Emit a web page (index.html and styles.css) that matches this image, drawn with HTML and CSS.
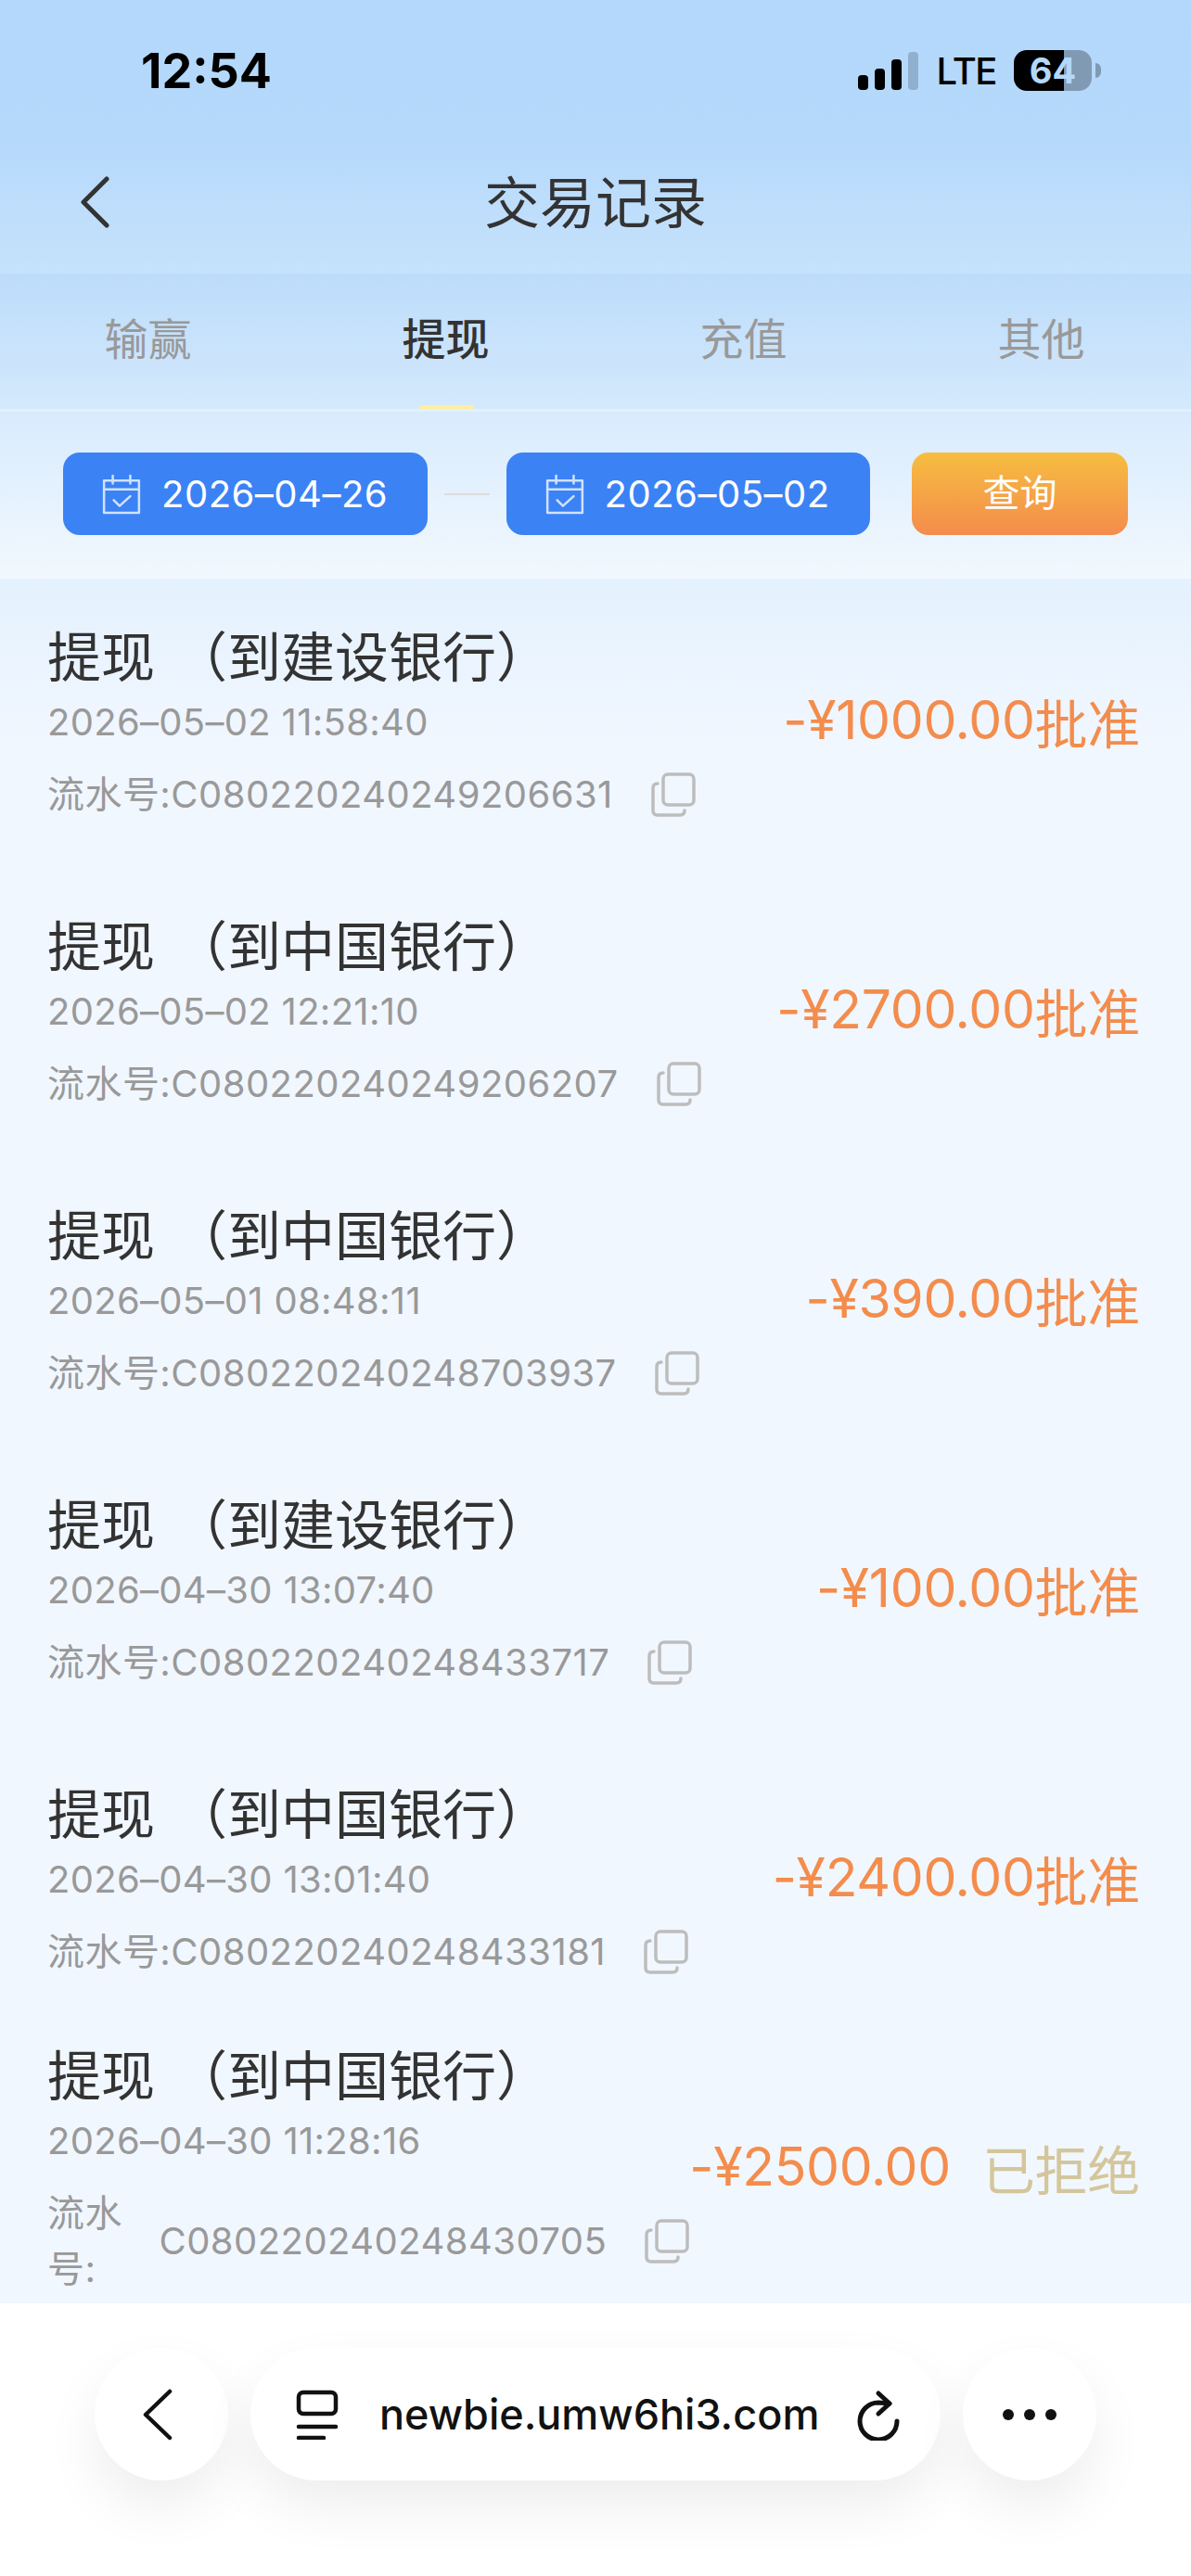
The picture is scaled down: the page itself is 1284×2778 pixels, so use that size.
FILE: index.html
```html
<!DOCTYPE html>
<html lang="zh-CN">

<head>
    <meta charset="UTF-8">
    <meta name="viewport" content="width=device-width, initial-scale=1.0">
    <title>交易记录</title>
    <link rel="stylesheet" href="styles.css">
</head>

<body>
    <div class="page">
        <header class="top">
            <div class="status">
                <span class="time">12:54</span>
                <div class="status-right">
                    <div class="signal">
                        <i class="bar bar-1"></i>
                        <i class="bar bar-2"></i>
                        <i class="bar bar-3"></i>
                        <i class="bar bar-4"></i>
                    </div>
                    <span class="lte">LTE</span>
                    <div class="battery"><span class="battery-level">64</span></div>
                    <i class="battery-cap"></i>
                </div>
            </div>
            <div class="nav">
                <svg class="nav-back" viewBox="0 0 32 56" fill="none" stroke="#333" stroke-width="5" stroke-linecap="round" stroke-linejoin="round">
                    <path d="M29 3 L4 28 L29 53" />
                </svg>
                <h1 class="nav-title">交易记录</h1>
            </div>
        </header>

        <nav class="tabs">
            <div class="tab">输赢</div>
            <div class="tab active">提现</div>
            <div class="tab">充值</div>
            <div class="tab">其他</div>
        </nav>

        <section class="filter">
            <div class="date-btn">
                <svg class="cal" viewBox="0 0 42 42" fill="none" stroke="#cfe2fd" stroke-width="2.4" stroke-linecap="round" stroke-linejoin="round">
                    <path d="M3 7 H39 V40 H3 Z" />
                    <path d="M3 16 H39" />
                    <path d="M12 2 V10 M30 2 V10" />
                    <path d="M13 27 L19 33 L30 23" />
                </svg>
                <span>2026–04–26</span>
            </div>
            <i class="dash"></i>
            <div class="date-btn">
                <svg class="cal" viewBox="0 0 42 42" fill="none" stroke="#cfe2fd" stroke-width="2.4" stroke-linecap="round" stroke-linejoin="round">
                    <path d="M3 7 H39 V40 H3 Z" />
                    <path d="M3 16 H39" />
                    <path d="M12 2 V10 M30 2 V10" />
                    <path d="M13 27 L19 33 L30 23" />
                </svg>
                <span>2026–05–02</span>
            </div>
            <div class="search-btn">查询</div>
        </section>

        <main class="list" id="list"></main>

        <footer class="toolbar">
            <div class="round-btn">
                <svg class="tool-back" viewBox="0 0 32 56" fill="none" stroke="#111" stroke-width="4.5" stroke-linecap="round" stroke-linejoin="round">
                    <path d="M29 3 L3 28 L29 53" />
                </svg>
            </div>
            <div class="url-bar">
                <svg class="url-icon" viewBox="0 0 48 54" fill="none" stroke="#111" stroke-width="4.5" stroke-linecap="round" stroke-linejoin="round">
                    <rect x="4" y="3" width="40" height="23" rx="5" />
                    <path d="M4 40 H44" />
                    <path d="M4 52 H31" />
                </svg>
                <span class="url-text">newbie.umw6hi3.com</span>
                <svg class="reload" viewBox="0 0 48 56" fill="none" stroke="#111" stroke-width="5" stroke-linecap="round" stroke-linejoin="round">
                    <path d="M43 35 A20 20 0 1 1 23 15 L35 16" />
                    <path d="M23 5 L35 16 L23 27" />
                </svg>
            </div>
            <div class="round-btn">
                <div class="dots"><i></i><i></i><i></i></div>
            </div>
        </footer>
    </div>

    <script>
        const records = [
            { bank: "建设银行", time: "2026–05–02 11:58:40", no: "C080220240249206631", amount: "-¥1000.00", state: "批准" },
            { bank: "中国银行", time: "2026–05–02 12:21:10", no: "C080220240249206207", amount: "-¥2700.00", state: "批准" },
            { bank: "中国银行", time: "2026–05–01 08:48:11", no: "C080220240248703937", amount: "-¥390.00", state: "批准" },
            { bank: "建设银行", time: "2026–04–30 13:07:40", no: "C080220240248433717", amount: "-¥100.00", state: "批准" },
            { bank: "中国银行", time: "2026–04–30 13:01:40", no: "C080220240248433181", amount: "-¥2400.00", state: "批准" },
            { bank: "中国银行", time: "2026–04–30 11:28:16", no: "C080220240248430705", amount: "-¥2500.00", state: "已拒绝" }
        ];

        const copyIcon = `<svg class="copy" viewBox="0 0 48 48" fill="none" stroke="#bdbdbd" stroke-width="3.5" stroke-linejoin="round" stroke-linecap="round">
            <rect x="13" y="2" width="33" height="33" rx="5" />
            <path d="M7 12 Q2 12 2 17 V41 Q2 46 7 46 H31 Q36 46 36 41" />
        </svg>`;

        // Build the rows
        document.getElementById('list').innerHTML = records.map(r => {
            const stateClass = r.state === "批准" ? "state" : "state rejected";
            return `<article class="row">
                <div class="row-left">
                    <div class="row-title">提现<span class="row-bank">（到${r.bank}）</span></div>
                    <div class="row-time">${r.time}</div>
                    <div class="row-flow">
                        <span class="flow-label">流水号:</span>
                        <span class="flow-no">${r.no}</span>
                        ${copyIcon}
                    </div>
                </div>
                <div class="row-right">
                    <span class="amount">${r.amount}</span>
                    <span class="${stateClass}">${r.state}</span>
                </div>
            </article>`;
        }).join('');
    </script>
</body>

</html>
```

FILE: styles.css
```css
* {
    box-sizing: border-box;
}

body {
    margin: 0;
    font-family: 'Inter', 'Noto Sans CJK SC', sans-serif;
    color: #333;
    background: #f0f6ff;
}

.page {
    width: 1284px;
    height: 2778px;
    display: flex;
    flex-direction: column;
    overflow: hidden;
}

/* status bar + nav */
.top {
    height: 295px;
    background: linear-gradient(180deg, #b4d8fb 0%, #b5d9fb 50%, #c6e2fc 100%);
}

.status {
    height: 148px;
    padding: 4px 97px 0 152px;
    display: flex;
    align-items: center;
    justify-content: space-between;
    color: #000;
}

.time {
    font-family: 'Inter', sans-serif;
    font-size: 52px;
    font-weight: 700;
}

.status-right {
    display: flex;
    align-items: center;
}

.signal {
    display: flex;
    align-items: flex-end;
    gap: 7px;
    height: 41px;
    margin-right: 19px;
}

.bar {
    width: 11px;
    background: #000;
    border-radius: 4px;
}

.bar-1 { height: 16px; }
.bar-2 { height: 23px; }
.bar-3 { height: 33px; }
.bar-4 { height: 41px; background: #90b0d0; }

.lte {
    font-size: 40px;
    font-weight: 500;
    letter-spacing: -1.5px;
    margin-right: 19px;
}

.battery {
    width: 84px;
    height: 44px;
    border-radius: 14px;
    background: linear-gradient(90deg, #000 0, #000 54px, #819ab3 54px);
    display: flex;
    align-items: center;
    justify-content: center;
    color: #b4d8fb;
}

.battery-level {
    font-size: 38px;
    font-weight: 700;
}

.battery-cap {
    width: 6px;
    height: 16px;
    margin-left: 4px;
    background: #819ab3;
    border-radius: 0 8px 8px 0;
}

.nav {
    position: relative;
    height: 147px;
    display: flex;
    align-items: center;
    justify-content: center;
    padding-bottom: 14px;
}

.nav-back {
    position: absolute;
    left: 86px;
    top: 42px;
    width: 32px;
    height: 56px;
}

.nav-title {
    margin: 0;
    font-size: 60px;
    font-weight: 400;
    color: #333;
}

/* tabs */
.tabs {
    height: 149px;
    display: grid;
    grid-template-columns: repeat(4, 1fr);
    background: linear-gradient(180deg, #bcdcfb 0%, #d4e9fc 100%);
    border-bottom: 3px solid #e3f0fd;
}

.tab {
    position: relative;
    padding-right: 2px;
    text-align: center;
    font-size: 47px;
    line-height: 141px;
    color: #999;
}

.tab.active {
    color: #333;
    font-weight: 500;
}

.tab.active::after {
    content: "";
    position: absolute;
    left: 131px;
    bottom: 0;
    width: 59px;
    height: 4px;
    background: #fdeea0;
}

/* date filter */
.filter {
    height: 180px;
    padding: 44px 68px 0;
    display: flex;
    align-items: flex-start;
    background: linear-gradient(180deg, #d8ebfd 0%, #f2f8fe 100%);
}

.date-btn {
    width: 393px;
    height: 89px;
    padding-left: 41px;
    display: flex;
    align-items: center;
    gap: 21px;
    border-radius: 18px;
    background: #3b82f5;
    color: #fff;
    font-size: 40px;
    letter-spacing: 0.5px;
}

.cal {
    width: 44px;
    height: 44px;
}

.dash {
    width: 49px;
    height: 2px;
    margin: 44px 18px 0;
    background: #dcdcdc;
}

.search-btn {
    width: 233px;
    height: 89px;
    margin-left: 45px;
    border-radius: 18px;
    background: linear-gradient(180deg, #f6bd40 0%, #f48c4c 100%);
    color: #fff;
    font-size: 40px;
    line-height: 87px;
    text-align: center;
}

/* record list */
.list {
    flex: 1;
    min-height: 0;
    overflow: hidden;
    background: linear-gradient(180deg, #e4f1fe 0, #f1f7ff 180px);
}

.row {
    height: 312px;
    flex-shrink: 0;
    padding: 0 55px 4px 51px;
    display: flex;
    align-items: center;
    justify-content: space-between;
}

.row-left {
    flex: 0 1 auto;
    min-width: 0;
}

.row-title {
    font-size: 58px;
    line-height: 80px;
    color: #333;
    white-space: nowrap;
}

.row-bank {
    margin-left: 20px;
}

.row-time {
    font-size: 40px;
    line-height: 60px;
    color: #999;
    letter-spacing: 0.3px;
    white-space: nowrap;
}

.row-flow {
    margin-top: 18px;
    display: flex;
    align-items: center;
    font-size: 40px;
    line-height: 60px;
    letter-spacing: 0.45px;
    color: #999;
}

.flow-no {
    white-space: nowrap;
}

.copy {
    flex: none;
    width: 48px;
    height: 48px;
    margin-left: 41px;
}

.row-right {
    flex: none;
    display: flex;
    align-items: center;
    gap: 34px;
    margin-bottom: 3px;
    font-size: 57px;
    letter-spacing: -0.3px;
    color: #f48c4c;
}

.row-right .state {
    margin-left: -34px;
}

.row-right .state.rejected {
    margin-left: 0;
    color: #d4c69c;
}

/* browser toolbar */
.toolbar {
    height: 294px;
    padding: 48px 102px 0;
    display: flex;
    align-items: flex-start;
    gap: 24px;
    background: #fff;
}

.round-btn {
    width: 144px;
    height: 143px;
    flex: none;
    border-radius: 50%;
    background: #fff;
    box-shadow: 0 28px 60px rgba(0, 0, 0, 0.07);
    display: flex;
    align-items: center;
    justify-content: center;
}

.tool-back {
    width: 32px;
    height: 56px;
    margin-right: 8px;
}

.url-bar {
    width: 744px;
    height: 143px;
    flex: none;
    padding: 0 42px 0 48px;
    border-radius: 72px;
    background: #fff;
    box-shadow: 0 28px 60px rgba(0, 0, 0, 0.07);
    display: flex;
    align-items: center;
}

.url-icon {
    flex: none;
    width: 48px;
    height: 54px;
    margin-right: 43px;
}

.url-text {
    font-size: 45px;
    font-weight: 500;
    color: #111;
    white-space: nowrap;
}

.reload {
    flex: none;
    width: 48px;
    height: 56px;
    margin-left: auto;
}

.dots {
    display: flex;
    gap: 11px;
}

.dots i {
    width: 12px;
    height: 12px;
    border-radius: 50%;
    background: #111;
}
```
